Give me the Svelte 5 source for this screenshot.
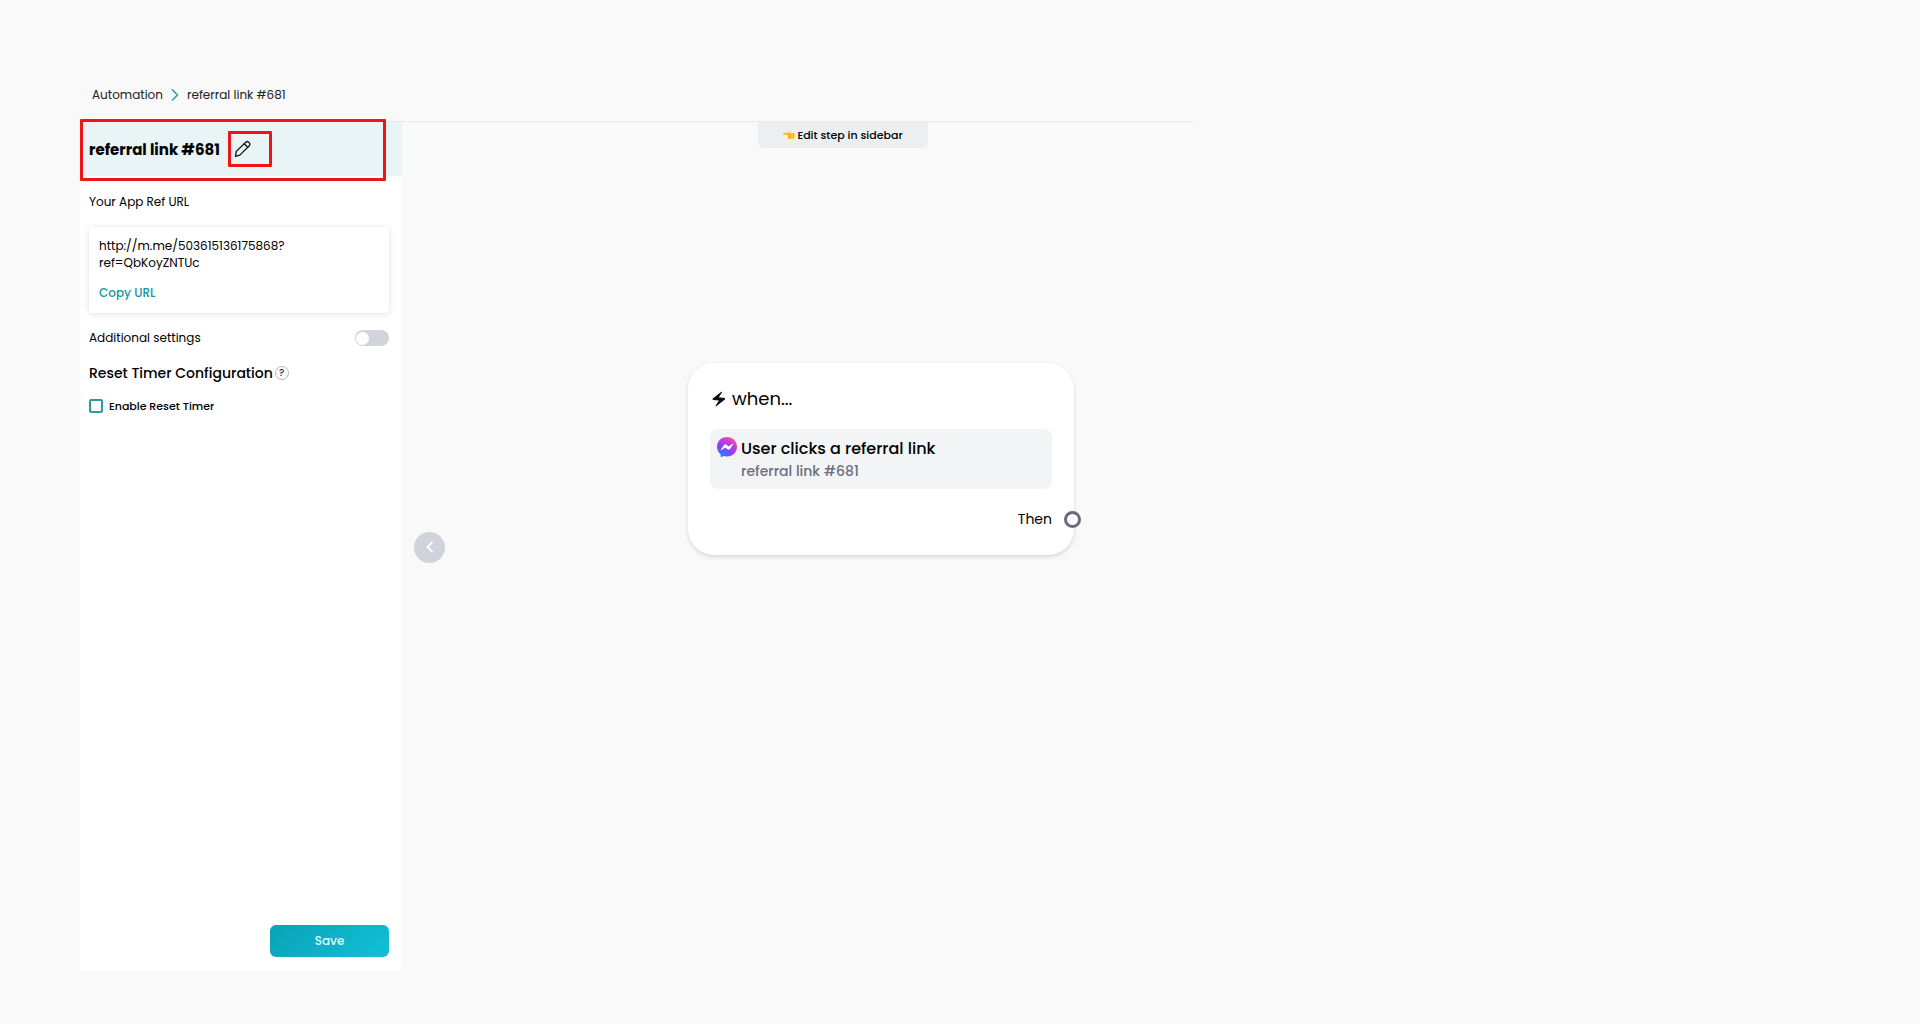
<script lang="ts">
	const name = 'referral link #681';
	const url = 'http://m.me/503615136175868?ref=QbKoyZNTUc';

	let additional = $state(false);
	let resetTimer = $state(false);

	function copyUrl() {
		navigator.clipboard?.writeText(url);
	}
</script>

<div class="page">
	<nav class="crumbs" aria-label="Breadcrumb">
		<a href="#automation">Automation</a>
		<svg width="8" height="14" viewBox="0 0 8 14" aria-hidden="true">
			<path d="M1 1.5 6.5 7 1 12.5" fill="none" stroke="#1799a3" stroke-width="1.4" />
		</svg>
		<span>{name}</span>
	</nav>

	<main class="workspace">
		<aside class="sidebar">
			<header class="side-head">
				<h1>{name}</h1>
				<button class="edit" type="button" aria-label="Edit name">
					<svg width="18" height="18" viewBox="0 0 18 18" aria-hidden="true">
						<g fill="none" stroke="#111" stroke-width="1.3" stroke-linejoin="round" stroke-linecap="round">
							<path d="M2.2 11.4 11.8 2.2c.8-.8 2-.8 2.8 0l.7.7c.8.8.8 2 0 2.8L5.800 15.1l-4.3 1.2z" />
							<path d="m10.2 3.8 3.5 3.5" />
						</g>
					</svg>
				</button>
			</header>

			<div class="side-body">
				<h2 class="label">Your App Ref URL</h2>
				<div class="url-card">
					<p>http://m.me/503615136175868?<wbr />ref=QbKoyZNTUc</p>
					<button class="copy" type="button" onclick={copyUrl}>Copy URL</button>
				</div>

				<label class="setting">
					<span>Additional settings</span>
					<input class="switch" type="checkbox" role="switch" bind:checked={additional} />
				</label>

				<h2 class="section-title">
					Reset Timer Configuration
					<button class="help" type="button" aria-label="About the reset timer">?</button>
				</h2>
				<label class="check">
					<input type="checkbox" bind:checked={resetTimer} />
					<span>Enable Reset Timer</span>
				</label>
			</div>

			<footer class="side-foot">
				<button class="save" type="button">Save</button>
			</footer>
		</aside>

		<section class="canvas" aria-label="Flow">
			<button class="collapse" type="button" aria-label="Collapse sidebar">
				<svg width="8" height="14" viewBox="0 0 8 14" aria-hidden="true">
					<path d="M6.5 2 1.5 7l5 5" fill="none" stroke="#fff" stroke-width="1.8" />
				</svg>
			</button>

			<p class="hint">
				<svg width="12" height="9" viewBox="0 0 12 9" aria-hidden="true">
					<path
						d="M.8 1.8H5L4.700.8c.5-.3 1 .1 1.400.4L7.500 2h2.700c1 0 1.500.6 1.500 1.500v2.600c0 1.200-.8 2-2 2H6.300c-1 0-1.600-.6-1.600-1.500 0-.6.1-.9.4-1.200-.4-.4-.5-1-.3-1.500H.8C-.1 3.800-.1 1.800.8 1.800z"
						fill="#fbc02d"
					/>
					<path d="M5.1 5.4h2.4M5 6.900h2.300M4.800 3.800h3" fill="none" stroke="#e59600" stroke-width=".5" />
				</svg>
				<span>Edit step in sidebar</span>
			</p>

			<article class="node">
				<h2 class="node-title">
					<svg width="14" height="16" viewBox="0 0 14 16" aria-hidden="true">
						<path
							d="M9.400.8.8 7.600c-.5.5-.3 1.200.4 1.300l5.700.7-3.300 5.200c-.2.5.3.8.7.5l8.600-6.900c.5-.5.3-1.200-.4-1.300l-5.700-.8L10.100 1.300c.2-.5-.3-.8-.7-.5z"
							fill="#0b0d17"
						/>
					</svg>
					when...
				</h2>
				<div class="trigger">
					<svg width="20" height="20" viewBox="0 0 20 20" aria-hidden="true">
						<defs>
							<radialGradient id="msg" cx=".2" cy="1" r="1.1">
								<stop offset="0" stop-color="#0a8cff" />
								<stop offset=".5" stop-color="#8a3ffc" />
								<stop offset=".8" stop-color="#c93bd8" />
								<stop offset="1" stop-color="#ff5f73" />
							</radialGradient>
						</defs>
						<path
							d="M10 0C4.3 0 0 4.1 0 9.7c0 2.9 1.2 5.4 3.2 7.1.2.2.3.4.3.6l.1 1.8c0 .6.6.9 1.1.7l2-.9c.2-.1.3-.1.5 0 .9.2 1.8.4 2.8.4 5.7 0 10-4.1 10-9.7S15.7 0 10 0z"
							fill="url(#msg)"
						/>
						<path
							d="m4 12.5 2.9-4.6c.5-.7 1.5-.9 2.2-.4l2.3 1.7c.2.2.5.2.7 0l3.2-2.4c.4-.3 1 .2.7.6l-2.9 4.7c-.5.7-1.5.9-2.2.4l-2.4-1.8c-.2-.1-.5-.1-.7 0l-3.1 2.4c-.4.3-1-.2-.7-.6z"
							fill="#fff"
						/>
					</svg>
					<div>
						<h3>User clicks a referral link</h3>
						<p>{name}</p>
					</div>
				</div>
				<div class="then">
					<span>Then</span>
					<button class="port" type="button" aria-label="Connect next step"></button>
				</div>
			</article>
		</section>
	</main>
</div>

<style>
	:global(body) {
		background: #f9f9f9;
	}

	.page {
		box-sizing: border-box;
		display: flex;
		flex-direction: column;
		min-height: 100vh;
		padding: 68px 0 53px 80px;
		font-family: Poppins, Inter, sans-serif;
		font-size: 12px;
		color: #000;
	}

	h1,
	h2,
	h3,
	p {
		margin: 0;
		font: inherit;
	}

	button {
		padding: 0;
		border: 0;
		background: none;
		font: inherit;
		color: inherit;
		cursor: pointer;
	}

	svg {
		display: block;
		flex: none;
	}

	.crumbs {
		box-sizing: border-box;
		display: flex;
		align-items: center;
		gap: 8px;
		width: 60.5%;
		height: 54px;
		padding: 0 12px;
		border-bottom: 1px solid #e9eaeb;
		color: #222;
	}

	.crumbs a {
		color: inherit;
		text-decoration: none;
	}

	.workspace {
		flex: 1;
		display: flex;
	}

	.sidebar {
		flex: none;
		display: flex;
		flex-direction: column;
		width: 322px;
		background: #fff;
	}

	.side-head {
		position: relative;
		display: flex;
		align-items: center;
		gap: 8px;
		height: 54px;
		padding-left: 9px;
		background: #e8f4f6;
	}

	.side-head::after {
		content: '';
		position: absolute;
		inset: -3px 16px -5px 0;
		border: 3px solid #ed1515;
		border-radius: 1px;
		pointer-events: none;
	}

	.side-head h1 {
		font-size: 15px;
		font-weight: 700;
	}

	.edit {
		box-sizing: border-box;
		width: 44px;
		height: 36px;
		padding-left: 3px;
		border: 3px solid #ed1515;
		border-radius: 1px;
	}

	.side-body {
		flex: 1;
		padding: 16px 13px 0 9px;
	}

	.label {
		line-height: 20px;
	}

	.url-card {
		margin: 15px 0;
		padding: 10px;
		border-radius: 3px;
		background: #fff;
		box-shadow: 0 1px 6px rgba(0, 0, 0, 0.12);
		line-height: 17px;
	}

	.copy {
		margin-top: 12px;
		font-weight: 500;
		line-height: 20px;
		color: #1397a0;
	}

	.setting {
		display: flex;
		align-items: center;
		justify-content: space-between;
		height: 20px;
	}

	.switch {
		appearance: none;
		display: flex;
		align-items: center;
		width: 34px;
		height: 16px;
		margin: 0;
		padding: 1px;
		box-sizing: border-box;
		border-radius: 8px;
		background: #d1d4da;
	}

	.switch::before {
		content: '';
		width: 13px;
		height: 13px;
		border-radius: 50%;
		background: #fff;
	}

	.switch:checked {
		justify-content: flex-end;
		background: #1397a0;
	}

	.section-title {
		display: flex;
		align-items: center;
		gap: 2px;
		margin: 15px 0 13px;
		font-size: 14px;
		font-weight: 500;
		line-height: 20px;
	}

	.help {
		box-sizing: border-box;
		width: 14px;
		height: 14px;
		border: 1px solid #b5b7c2;
		border-radius: 50%;
		font-size: 10px;
		font-weight: 500;
		line-height: 12px;
		color: #334;
	}

	.check {
		display: flex;
		align-items: center;
		gap: 6px;
		height: 20px;
		font-size: 11px;
		font-weight: 500;
	}

	.check input {
		appearance: none;
		box-sizing: border-box;
		width: 14px;
		height: 14px;
		margin: 0;
		border: 2px solid #2d9aa2;
		border-radius: 2px;
	}

	.check input:checked {
		background: #2d9aa2;
	}

	.side-foot {
		display: flex;
		justify-content: flex-end;
		padding: 0 13px 14px;
	}

	.save {
		width: 119px;
		height: 32px;
		border-radius: 6px;
		background: linear-gradient(135deg, #09a3b5, #12bfd8);
		font-weight: 500;
		color: #e2f8fb;
	}

	.canvas {
		position: relative;
		flex: 1;
	}

	.collapse {
		position: absolute;
		top: 50%;
		left: 12px;
		display: grid;
		place-items: center;
		width: 31px;
		height: 31px;
		margin-top: -15px;
		border-radius: 50%;
		background: #d0d3d9;
	}

	.hint {
		position: absolute;
		top: 0;
		left: 356px;
		box-sizing: border-box;
		display: flex;
		align-items: center;
		justify-content: center;
		gap: 2px;
		width: 170px;
		height: 26px;
		border-radius: 0 0 6px 6px;
		background: #ebeff2;
		font-size: 11px;
		font-weight: 500;
	}

	.node {
		position: absolute;
		top: 241px;
		left: 286px;
		box-sizing: border-box;
		width: 386px;
		padding: 22px;
		border-radius: 26px;
		background: #fff;
		box-shadow: 0 2px 4px rgba(0, 0, 0, 0.14);
	}

	.node-title {
		display: flex;
		align-items: center;
		gap: 6px;
		padding-left: 2px;
		font-size: 18px;
		line-height: 28px;
	}

	.trigger {
		display: flex;
		gap: 4px;
		margin: 16px 0;
		padding: 8px 7px;
		border-radius: 8px;
		background: #f2f4f6;
	}

	.trigger h3 {
		font-size: 16px;
		font-weight: 500;
		line-height: 24px;
	}

	.trigger p {
		font-size: 14px;
		font-weight: 500;
		line-height: 20px;
		color: #6b7080;
	}

	.then {
		display: flex;
		align-items: center;
		justify-content: flex-end;
		gap: 12px;
		height: 28px;
		margin-right: -29px;
		font-size: 14px;
	}

	.port {
		box-sizing: border-box;
		width: 17px;
		height: 17px;
		border: 3px solid #666b7b;
		border-radius: 50%;
		background: #fff;
	}
</style>
